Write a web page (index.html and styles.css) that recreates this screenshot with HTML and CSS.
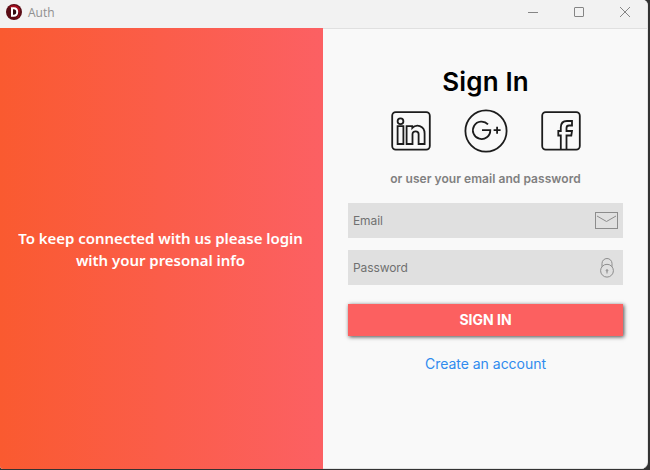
FILE: index.html
```
<!DOCTYPE html>
<html lang="en">
<head>
<meta charset="utf-8">
<title>Auth</title>
<link rel="stylesheet" href="styles.css">
</head>
<body>
<div class="window">
  <header class="titlebar">
    <svg class="app-icon" width="16" height="16" viewBox="0 0 16 16"><circle cx="8" cy="8" r="8" fill="#5a0d16"/><path d="M3 3A7 7 0 0 1 14 5L13 13L8 15A7 7 0 0 0 13 8Z" fill="#a80e20"/><path d="M6 4.2H7.7C10.2 4.2 11.2 5.8 11.2 8S10.2 11.8 7.7 11.8H6Z" fill="#300b10" stroke="#fff" stroke-width="2"/></svg>
    <span class="app-name">Auth</span>
    <div class="controls">
      <svg width="12" height="12" viewBox="0 0 12 12"><path d="M1 6.5H11"/></svg>
      <svg width="12" height="12" viewBox="0 0 12 12"><rect x="1.5" y="1.5" width="9" height="9" rx=".5"/></svg>
      <svg width="12" height="12" viewBox="0 0 12 12"><path d="M1 1L11 11M11 1L1 11"/></svg>
    </div>
  </header>
  <main class="content">
    <section class="welcome"><p>To keep connected with us please login<br>with your presonal info</p></section>
    <section class="form">
      <h1>Sign In</h1>
      <div class="social">
        <svg width="40" height="44" viewBox="0 0 40 44"><rect x="1.2" y="3.2" width="37.6" height="37.4" rx="3.5"/><circle cx="9.5" cy="12.2" r="2.9"/><path d="M6.6 17.2H12.4V35H6.6ZM15.6 17.2H21.3V19C25 15 33.6 16 33.6 24.5V35H27.6V25C27.6 21.4 21.5 21.4 21.5 25V35H15.6Z"/></svg>
        <svg width="44" height="44" viewBox="0 0 44 44"><circle cx="22" cy="22" r="20.6"/><path d="M24 15.4A8.7 8.7 0 1 0 26.3 21.2H18M29.6 21.2H36.6M33.1 17.7V24.7"/></svg>
        <svg width="40" height="44" viewBox="0 0 40 44"><rect x="1.2" y="3.2" width="37.6" height="37.4" rx="3.5"/><path d="M19.8 40V26.5H17.3V22H19.8V18.5C19.8 14 22.5 12 26 12H31V16.5H28C26 16.5 25.5 17.2 25.5 19V22H31L30.3 26.5H25.5V40"/></svg>
      </div>
      <p class="hint">or user your email and password</p>
      <div class="field"><span>Email</span>
        <svg width="23" height="17" viewBox="0 0 23 17"><rect x=".5" y=".5" width="22" height="16"/><path d="M2 4L11.5 9.5L21 4"/></svg>
      </div>
      <div class="field field-password"><span>Password</span>
        <svg width="14" height="20" viewBox="0 0 14 20"><circle cx="7" cy="12.7" r="6.4"/><path d="M2 8.7V5.5A5 5 0 0 1 12 5.5V8.7M7 12.5V15.5"/><circle cx="7" cy="12.4" r=".8"/></svg>
      </div>
      <button class="submit">SIGN IN</button>
      <a class="create">Create an account</a>
    </section>
  </main>
</div>
</body>
</html>
```
FILE: styles.css
```
* { box-sizing: border-box; }
body { margin: 0; height: 470px; background: #333; overflow: hidden; font-family: Inter, sans-serif; }
.window { width: 648px; height: 469px; background: #f9f9f9; border-radius: 0 5px 7px 3px; overflow: hidden; border-right: 1px solid #e4e4e4; }
.titlebar { height: 28px; background: #f2f2f2; display: flex; align-items: center; padding: 0 16px 3px 6px; }
.app-icon { position: relative; top: -1px; }
.app-name { margin-left: 6px; font: 12px "Open Sans", sans-serif; color: #909090; line-height: 16px; padding-top: 1px; }
.controls { margin-left: auto; display: flex; gap: 34px; }
.controls svg { fill: none; stroke: #858585; stroke-width: 1; position: relative; top: -1px; }
.content { display: flex; height: 441px; }
.welcome { width: 323px; flex: none; background: linear-gradient(90deg, #fa5a30, #fc6063); display: flex; align-items: center; justify-content: center; padding-right: 2px; }
.welcome p { margin: 0; text-align: center; color: #fff; font: 600 15px/22px "Noto Sans", sans-serif; letter-spacing: -.03px; white-space: nowrap; }
.form { flex: 1; border-top: 1px solid #e0e0e0; border-bottom: 1px solid #e3e3e3; padding: 37px 24px 0 25px; display: flex; flex-direction: column; align-items: stretch; }
h1 { margin: 0; font-size: 26px; line-height: 32px; font-weight: 600; letter-spacing: .15px; text-align: center; color: #000; }
.social { margin-top: 11px; display: flex; justify-content: center; gap: 33px; }
.social svg { fill: none; stroke: #1c1c1c; stroke-width: 1.8; }
.hint { margin: 18px 0 0; font-size: 12px; line-height: 16px; font-weight: 600; letter-spacing: .05px; color: #808080; text-align: center; white-space: nowrap; }
.field { height: 35px; margin-top: 16px; background: #e0e0e0; display: flex; align-items: center; justify-content: space-between; padding: 0 5px; font-size: 12px; letter-spacing: -.1px; color: #707070; }
.field-password { margin-top: 12px; padding-right: 9.5px; }
.field svg { fill: none; stroke: #8c8c8c; stroke-width: 1; }
.submit { height: 32px; margin: 19px 0 0; padding: 0; border: 0; border-radius: 0; background: #fc6060; box-shadow: 1px 1px 4px rgba(0,0,0,.7); color: #fff; font: 700 14px/32px Inter, sans-serif; }
.create { margin-top: 19px; font-size: 14px; line-height: 18px; letter-spacing: -.02px; color: #308bee; text-align: center; }
```
